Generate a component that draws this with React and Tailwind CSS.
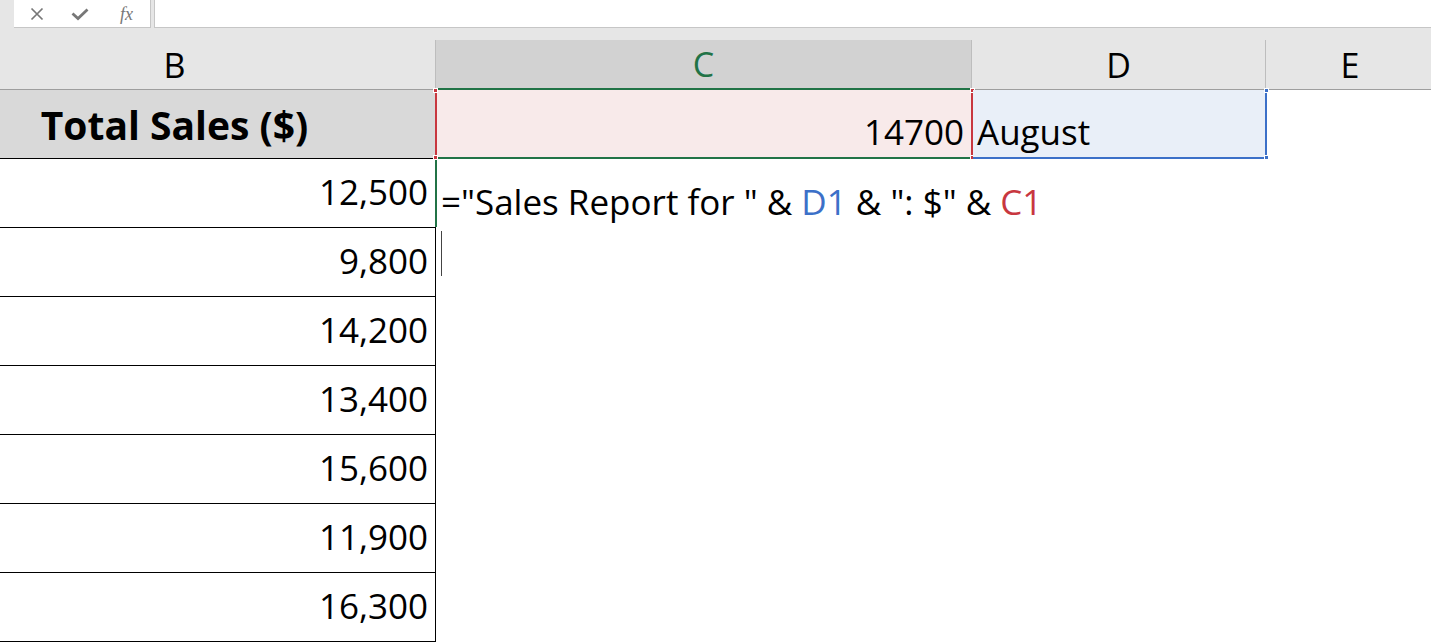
import React from 'react';

const sales = ['12,500', '9,800', '14,200', '13,400', '15,600', '11,900', '16,300'];

function Handle({ className }) {
  return <span className={`absolute w-[5px] h-[5px] ${className}`} />;
}

export default function App() {
  return (
    <div className="w-[1431px] h-[642px] overflow-hidden bg-white text-black" style={{ fontFamily: '"Open Sans", Lato, sans-serif' }}>
      {/* formula bar */}
      <div className="flex h-[28px] bg-[#e6e6e6]">
        <div className="ml-[14px] w-[137px] h-[28px] bg-white border-r border-b border-[#c6c6c6] flex items-center">
          <svg className="ml-[16px]" width="14" height="14" viewBox="0 0 14 14">
            <path d="M1.5 1.5 L12.5 12.5 M12.5 1.5 L1.5 12.5" stroke="#777" strokeWidth="1.7" />
          </svg>
          <svg className="ml-[27px]" width="18" height="14" viewBox="0 0 18 14">
            <path d="M1.5 6.5 L7 11.5 L16.5 2.5" stroke="#777" strokeWidth="2.8" fill="none" />
          </svg>
          <span className="ml-[31px] text-[18px] italic text-[#777] leading-none" style={{ fontFamily: '"Liberation Serif", serif' }}>
            fx
          </span>
        </div>
        <div className="ml-[3px] flex-1 h-[28px] bg-white border-l border-b border-[#c6c6c6]" />
      </div>
      <div className="h-[12px] bg-[#e6e6e6]" />

      {/* column headers */}
      <div className="flex h-[50px] bg-[#e6e6e6] text-[34px] leading-none">
        <div className="w-[436px] box-border border-r border-b border-r-[#bdbdbd] border-b-[#9e9e9e] flex items-center justify-center pr-[86px]">B</div>
        <div className="w-[536px] box-border bg-[#d2d2d2] border-r border-r-[#bdbdbd] border-b-2 border-b-[#217346] flex items-center justify-center text-[#217346]">C</div>
        <div className="w-[294px] box-border border-r border-b border-r-[#bdbdbd] border-b-[#9e9e9e] flex items-center justify-center">D</div>
        <div className="flex-1 box-border border-b border-[#9e9e9e] flex items-center justify-center pl-[3px]">E</div>
      </div>

      {/* row 1 */}
      <div className="relative flex h-[69px]">
        <div className="w-[435px] box-border bg-[#d9d9d9] border-b border-black flex items-center justify-center pr-[86px] text-[39px] font-bold leading-none">
          Total Sales ($)
        </div>
        <div className="relative w-[538px] box-border bg-[#f8eaea] border-l-2 border-r-2 border-l-[#c8373f] border-r-[#c8373f] border-b-2 border-b-[#217346] flex items-center justify-end pr-[7px] pt-[16px] text-[35px] leading-none">
          14700
          <Handle className="-left-[4px] -top-[2px] bg-[#c8373f] border border-white" />
          <Handle className="-left-[4px] -bottom-[3px] bg-[#c8373f] border border-white" />
          <Handle className="-right-[4px] -top-[2px] bg-[#c8373f] border border-white" />
          <Handle className="-right-[4px] -bottom-[3px] bg-[#c8373f] border border-white" />
        </div>
        <div className="relative w-[294px] box-border bg-[#e9eff8] border-r-2 border-b-2 border-[#3c70c8] flex items-center pl-[4px] pt-[16px] text-[35px] leading-none">
          August
          <Handle className="-right-[4px] -top-[2px] bg-[#3c70c8] border border-white" />
          <Handle className="-right-[4px] -bottom-[3px] bg-[#3c70c8] border border-white" />
        </div>
        <div className="flex-1" />
      </div>

      {/* data rows */}
      {sales.map((v, i) => (
        <div key={v} className="flex h-[69px] text-[35px] leading-none">
          <div className="w-[436px] box-border border-r border-b border-black flex items-center justify-end pr-[7px] pb-[3px]">{v}</div>
          {i === 0 ? (
            <div className="-ml-[1px] flex-1 box-border border-l-2 border-[#217346] h-[68px] flex items-center pl-[4px] pt-[17px] whitespace-nowrap">
              <span>="Sales Report for " &amp; </span>
              <span className="text-[#3c70c8]">&nbsp;D1</span>
              <span>&nbsp;&amp; ": $" &amp; </span>
              <span className="text-[#c8373f]">&nbsp;C1</span>
            </div>
          ) : i === 1 ? (
            <div className="flex-1 pl-[5px] pt-[3px]">
              <div className="w-px h-[45px] bg-[#444]" />
            </div>
          ) : (
            <div className="flex-1" />
          )}
        </div>
      ))}
    </div>
  );
}
